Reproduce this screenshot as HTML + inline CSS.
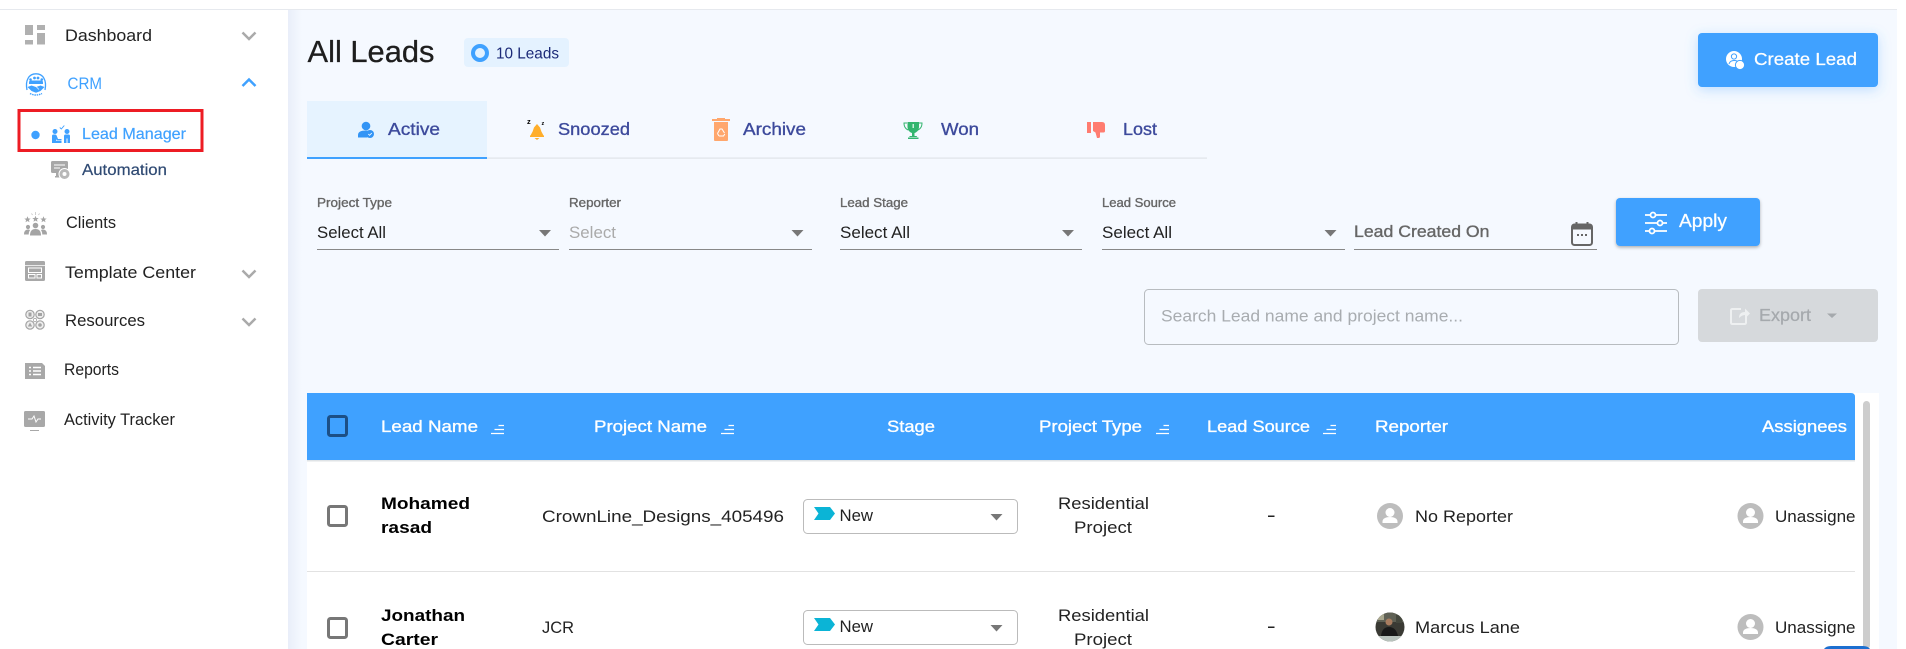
<!DOCTYPE html>
<html lang="en">
<head>
<meta charset="utf-8">
<title>All Leads</title>
<style>
html,body{margin:0;padding:0;width:1906px;height:649px;overflow:hidden;background:#fff}
svg{display:block}
text{font-family:"Liberation Sans",sans-serif;fill:currentColor;stroke-linejoin:round}
.m{stroke:currentColor;stroke-width:.35px}
.b{font-weight:700}
.nav{font-size:17px;color:#222}
.sub{font-size:16px}
.tab{font-size:17.5px;color:#3d4a9c}
.lab{font-size:12.5px;color:#666}
.val{font-size:16.5px;color:#222}
.th{font-size:17px;color:#fff}
.td{font-size:17px;color:#222}
.nm{font-size:17px;color:#000}
</style>
</head>
<body>
<svg width="1906" height="649" viewBox="0 0 1906 649" xmlns="http://www.w3.org/2000/svg">
<defs>
<linearGradient id="lg"><stop offset="0" stop-color="#e9eef9"/><stop offset="1" stop-color="#f5f9ff"/></linearGradient>
<filter id="sb" x="-20%" y="-40%" width="140%" height="190%"><feDropShadow dx="0" dy="3" stdDeviation="6" flood-color="#3fa1ff" flood-opacity=".3"/></filter>
<filter id="sd" x="-10%" y="-20%" width="120%" height="150%"><feDropShadow dx="0" dy="1.5" stdDeviation="1.5" flood-color="#000" flood-opacity=".3"/></filter>
<clipPath id="cp"><rect x="1700" y="460" width="155" height="189"/></clipPath>
<clipPath id="ph"><ellipse cx="1390" cy="627" rx="14.5" ry="14.5"/></clipPath>
<g id="ava"><circle r="13" fill="#bdbdbd"/><circle cy="-3.500" r="4.500" fill="#fff"/><path d="M-7.500 7v-1.500c0-3 3.500-4.500 7.500-4.500s7.500 1.500 7.500 4.500V7z" fill="#fff"/></g>
<g id="cb"><rect x="1.500" y="1.500" width="18" height="19" rx="2" fill="none" stroke="#777" stroke-width="3"/></g>
<g id="sort" fill="none" stroke="#fff" stroke-width="1.300"><path d="M0 11.500H13M3.500 7.500H13M7.500 3.500H13"/></g>
<path id="car" d="M-6-3H6L0 3.500z" fill="#777"/>
<path id="chd" d="M-6.500-3.500 0 3l6.500-6.500" fill="none" stroke="#aaa" stroke-width="2.500"/>
<g id="sel"><rect x=".5" y=".5" width="214" height="34" rx="4" fill="#fff" stroke="#bbb"/><path d="M11 8H27L32 14.500 27 21H11L15.500 14.500z" fill="#0bb4d6"/></g>
<path id="star" d="M0-3.200.9-1 3.200-.9 1.400.5 2 2.800 0 1.500-2 2.800-1.400.5-3.200-.9-.9-1z" fill="#a4a4a4"/>
</defs>

<!-- page surfaces -->
<rect width="1906" height="649" fill="#fff"/>
<rect x="288" y="9" width="1609" height="640" fill="#f5f9ff"/>
<rect x="288" y="9" width="14" height="640" fill="url(#lg)"/>
<rect x="0" y="9" width="1897" height="1" fill="#e6e9ee"/>

<!-- sidebar -->
<g fill="#b0b0b0">
<rect x="25" y="25" width="8" height="10"/><rect x="37" y="25" width="8" height="5"/><rect x="25" y="40" width="8" height="4.500"/><rect x="37" y="33" width="8" height="11.500"/>
</g>
<text class="nav" x="65" y="41" textLength="87" lengthAdjust="spacingAndGlyphs">Dashboard</text>
<use href="#chd" x="249" y="36"/>

<g fill="#3fa1ff">
<path d="M27 90C25 80 29 73.800 36 73.800S47 80 45 90" fill="none" stroke="#3fa1ff" stroke-width="1.300"/>
<circle cx="30.500" cy="79.500" r="1.300"/><circle cx="34.500" cy="78" r="1.400"/><circle cx="38" cy="78" r="1.400"/><circle cx="41.800" cy="79.500" r="1.300"/>
<path d="M29 84v-1.500q0-2 2-2h10q2 0 2 2V84z"/>
<path d="M27.500 87l4-1.500 4.500 1.500 4.500-1.500 4 1.500-4 4-4.500 1.800-4.500-1.800z"/>
<path d="M36 86.500l3 3" stroke="#fff" stroke-width=".6"/>
<path d="M30 93.500q6 3 12 0" fill="none" stroke="#3fa1ff" stroke-width="1.400" stroke-dasharray="1.500 .8"/>
</g>
<text class="nav" x="67.500" y="89" textLength="34.500" lengthAdjust="spacingAndGlyphs" style="color:#3fa1ff">CRM</text>
<path d="M242.500 86 249 79.500 255.500 86" fill="none" stroke="#3fa1ff" stroke-width="2.500"/>

<rect x="19" y="110.500" width="183" height="40" fill="none" stroke="#ed1c24" stroke-width="3"/>
<circle cx="35.500" cy="135" r="4.200" fill="#3fa1ff"/>
<g fill="#3fa1ff">
<circle cx="55" cy="131.500" r="2.500"/><circle cx="67" cy="131.500" r="2.500"/>
<path d="M52 143v-7q0-1.500 1.500-1.500h1.700q1 0 1.400 1l1.400 3.500h3.500v1.500H57l-.8-1.500V141h5.300v2z"/>
<path d="M64 143v-7q0-1.500 1.500-1.500h3q1.500 0 1.500 1.500v7h-2.500v-4.500h-1V143z"/>
<path d="M59.800 127.500l1.500 1.500 3-3.500" fill="none" stroke="#3fa1ff" stroke-width=".9"/>
</g>
<text class="sub m" x="82" y="139" textLength="104" lengthAdjust="spacingAndGlyphs" style="color:#3fa1ff;stroke-width:.2px">Lead Manager</text>

<g>
<rect x="51" y="161" width="17" height="12" rx="1.500" fill="#a8a8a8"/>
<path d="M54 165h11M54 168h6" stroke="#fff" stroke-width="1"/>
<path d="M56 173h6v3h2v1.500h-9V176h1z" fill="#a8a8a8"/>
<circle cx="64.500" cy="174" r="5.500" fill="#b8b8b8" stroke="#fff" stroke-width="1"/><circle cx="64.500" cy="174" r="2" fill="#fff"/>
</g>
<text class="sub m" x="82" y="175" textLength="85" lengthAdjust="spacingAndGlyphs" style="color:#2f4a73;stroke-width:.2px">Automation</text>

<path d="M35.500 212v3M31.500 213.500l1 1.500M39.500 213.500l-1 1.500" stroke="#bdbdbd" stroke-width=".7"/>
<use href="#star" x="27.500" y="219.500"/><use href="#star" x="35.500" y="219"/><use href="#star" x="43.500" y="219.500"/>
<g fill="#a4a4a4">
<circle cx="28" cy="227" r="2.100"/><circle cx="35.500" cy="225.500" r="2.800"/><circle cx="43" cy="227" r="2.100"/>
<path d="M24 234.500q0-5 4-5 1.500 0 2 .7-1.300 1.500-1.300 4.300zM47 234.500q0-5-4-5-1.500 0-2 .7 1.300 1.500 1.300 4.300zM30 235.500q0-6.500 5.500-6.500t5.500 6.500z"/>
</g>
<text class="nav" x="66" y="228" textLength="50" lengthAdjust="spacingAndGlyphs">Clients</text>

<rect x="25" y="261" width="20" height="20" rx="1.500" fill="#a8a8a8"/>
<path d="M25 265.500h20" stroke="#fff" stroke-width=".8"/>
<g fill="none" stroke="#fff" stroke-width="1"><rect x="28.500" y="268" width="13" height="4.500"/><rect x="28.500" y="274.500" width="6.500" height="3.500"/><rect x="37" y="274.500" width="4.500" height="3.500"/></g>
<text class="nav" x="65" y="278" textLength="131" lengthAdjust="spacingAndGlyphs">Template Center</text>
<use href="#chd" x="249" y="274"/>

<g fill="#eeeeee" stroke="#a4a4a4" stroke-width="1.200">
<circle cx="30" cy="314.500" r="4.200"/><circle cx="40" cy="314.500" r="4.200"/><circle cx="30" cy="325" r="4.200"/><circle cx="40" cy="325" r="4.200"/>
<circle cx="35" cy="320" r="1.700" fill="#fff" stroke-width=".8"/>
</g>
<g fill="#a4a4a4">
<rect x="28.500" y="312.500" width="3" height="4"/><rect x="38" y="313" width="4" height="3"/><path d="M30 322.500l2.200 4h-4.400z"/><circle cx="40" cy="325" r="1.800"/>
</g>
<text class="nav" x="65" y="326" textLength="80" lengthAdjust="spacingAndGlyphs">Resources</text>
<use href="#chd" x="249" y="322"/>

<path d="M25 363h17l3 3v13H25z" fill="#a8a8a8"/>
<path d="M29 367.500h2M33 367.500h8M29 371h2M33 371h8M29 374.500h2M33 374.500h8" stroke="#fff" stroke-width="1.400"/>
<text class="nav" x="64" y="375" textLength="55" lengthAdjust="spacingAndGlyphs">Reports</text>

<rect x="24" y="411" width="21" height="16" rx="1.500" fill="#a8a8a8"/>
<path d="M28 419h4l2-3 2 6 2-3h3" fill="none" stroke="#fff" stroke-width="1"/>
<path d="M30 430.500h9" stroke="#a8a8a8" stroke-width="1"/>
<text class="nav" x="64" y="425" textLength="111" lengthAdjust="spacingAndGlyphs">Activity Tracker</text>

<!-- heading -->
<text class="m" x="307.500" y="62" font-size="31" textLength="127" lengthAdjust="spacingAndGlyphs" style="color:#1e1e1e;stroke-width:.3px">All Leads</text>
<rect x="464" y="38" width="105" height="29" rx="4" fill="#e4f2ff"/>
<circle cx="480" cy="53" r="7" fill="none" stroke="#3fa1ff" stroke-width="4"/>
<text x="496" y="58.500" font-size="16" textLength="63" lengthAdjust="spacingAndGlyphs" style="color:#1c2a78">10 Leads</text>

<rect x="1698" y="33" width="180" height="54" rx="4" fill="#3fa1ff" filter="url(#sb)"/>
<circle cx="1734" cy="59" r="8" fill="#fff"/>
<circle cx="1734" cy="56.500" r="2.600" fill="none" stroke="#3fa1ff" stroke-width="1"/><path d="M1729 64q1-3.500 5-3.500t5 2.500" fill="none" stroke="#3fa1ff" stroke-width="1"/>
<circle cx="1740" cy="65" r="4.600" fill="#fff" stroke="#3fa1ff" stroke-width="1"/>
<text class="m" x="1754" y="65" font-size="17.500" textLength="103" lengthAdjust="spacingAndGlyphs" style="color:#fff;stroke-width:.25px">Create Lead</text>

<!-- tabs -->
<rect x="307" y="101" width="180" height="56" fill="#e6f3ff"/>
<rect x="487" y="157.500" width="720" height="1.200" fill="#dfe3e8"/>
<rect x="307" y="157" width="180" height="2" fill="#3fa1ff"/>

<g fill="#3394f5">
<circle cx="366" cy="126" r="4.300"/>
<path d="M358 137.500v-2.500q0-4.500 8-4.500 3 0 4.500 .8-3.500 1.500-3 6.200z"/>
<circle cx="370" cy="134" r="4"/>
</g>
<path d="M368.300 134l1.300 1.300 2.200-2.300" fill="none" stroke="#fff" stroke-width=".8"/>
<text class="tab m" x="388" y="135" textLength="52" lengthAdjust="spacingAndGlyphs">Active</text>

<g fill="#ffae2b">
<path d="M537 124l3 3.500q1 4 3.500 8h-13q2.500-4 3.500-8z"/>
<rect x="530" y="135.500" width="14" height="1.500"/>
<path d="M534.500 138h5l-2.500 2z"/>
<text x="527" y="124" font-size="7.500" class="b">z</text><text x="541.500" y="125" font-size="5.500" class="b">z</text>
</g>
<text class="tab m" x="558" y="135" textLength="72" lengthAdjust="spacingAndGlyphs">Snoozed</text>

<g>
<rect x="712" y="119" width="18" height="2" fill="#ffa76d"/><rect x="717" y="118" width="8" height="1.500" fill="#ffa76d"/>
<path d="M714 122h14v18q0 1-1 1h-12q-1 0-1-1z" fill="#ffa76d"/>
<path d="M717.500 133.500l2.500-4.500h2l2.500 4M719 136h4.500l1.300-2M717.500 133.500l1.500 2.500" fill="none" stroke="#fff" stroke-width="1"/>
</g>
<text class="tab m" x="743" y="135" textLength="63" lengthAdjust="spacingAndGlyphs">Archive</text>

<g fill="#33b56f">
<path d="M907.500 122h11.500v5q0 5-5.700 6.500-5.800-1.500-5.800-6.500z"/>
<rect x="912" y="133" width="2.500" height="3"/>
<path d="M910 136h6.500l.8 1H909z"/><rect x="908" y="137.500" width="10.500" height="1.500"/>
<path d="M907 123h-3q0 5 4 7M919 123h3q0 5-4 7" fill="none" stroke="#33b56f" stroke-width="1"/>
</g>
<rect x="912.500" y="124" width="1.500" height="4" fill="#c9f0da"/>
<text class="tab m" x="941" y="135" textLength="38" lengthAdjust="spacingAndGlyphs">Won</text>

<g fill="#ff7c70">
<rect x="1087" y="122" width="4" height="11"/>
<path d="M1093 122h9q3 0 3 3v6q0 1.500-1.500 1.500H1100v4q0 1.500-1.500 1.500H1097l-1.500-5.500-2.500-1.500z"/>
</g>
<text class="tab m" x="1123" y="135" textLength="34" lengthAdjust="spacingAndGlyphs">Lost</text>

<!-- filters -->
<text class="lab m" x="317" y="207" textLength="75" lengthAdjust="spacingAndGlyphs">Project Type</text>
<text class="val" x="317" y="238" textLength="69" lengthAdjust="spacingAndGlyphs">Select All</text>
<use href="#car" x="545" y="233"/><rect x="317" y="249" width="242" height="1" fill="#888"/>

<text class="lab m" x="569" y="207" textLength="52" lengthAdjust="spacingAndGlyphs">Reporter</text>
<text class="val" x="569" y="238" textLength="47" lengthAdjust="spacingAndGlyphs" style="color:#aaa">Select</text>
<use href="#car" x="797.500" y="233"/><rect x="569" y="249" width="243" height="1" fill="#888"/>

<text class="lab m" x="840" y="207" textLength="68" lengthAdjust="spacingAndGlyphs">Lead Stage</text>
<text class="val" x="840" y="238" textLength="70" lengthAdjust="spacingAndGlyphs">Select All</text>
<use href="#car" x="1068" y="233"/><rect x="840" y="249" width="242" height="1" fill="#888"/>

<text class="lab m" x="1102" y="207" textLength="74" lengthAdjust="spacingAndGlyphs">Lead Source</text>
<text class="val" x="1102" y="238" textLength="70" lengthAdjust="spacingAndGlyphs">Select All</text>
<use href="#car" x="1330.500" y="233"/><rect x="1102" y="249" width="243" height="1" fill="#888"/>

<text class="m" x="1354" y="237" font-size="16.500" textLength="135.500" lengthAdjust="spacingAndGlyphs" style="color:#666">Lead Created On</text>
<rect x="1354" y="249" width="243" height="1" fill="#888"/>
<rect x="1572" y="224.500" width="20" height="20.500" rx="2.500" fill="#f5f9ff" stroke="#666" stroke-width="2"/>
<path d="M1572 224.500h20v5h-20z" fill="#666"/><path d="M1576.500 222v4M1587.500 222v4" stroke="#666" stroke-width="2"/>
<path d="M1577 235h2M1581 235h2M1585 235h2" stroke="#666" stroke-width="2"/>

<rect x="1616" y="198" width="144" height="48" rx="4" fill="#3fa1ff" filter="url(#sd)"/>
<g fill="none" stroke="#fff" stroke-width="1.800">
<path d="M1645 215h5M1656 215h11M1645 223h12M1663 223h4M1645 231h4M1655 231h12"/>
<circle cx="1653" cy="215" r="2.500"/><circle cx="1660" cy="223" r="2.500"/><circle cx="1652" cy="231" r="2.500"/>
</g>
<text class="m" x="1679" y="227" font-size="18.500" textLength="48" lengthAdjust="spacingAndGlyphs" style="color:#fff;stroke-width:.25px">Apply</text>

<rect x="1144.500" y="289.500" width="534" height="55" rx="4" fill="#f5f9ff" stroke="#b8bcc0"/>
<text x="1161" y="321.500" font-size="16.500" textLength="302" lengthAdjust="spacingAndGlyphs" style="color:#a8acb0">Search Lead name and project name...</text>

<rect x="1698" y="289" width="180" height="53" rx="4" fill="#d6d9dc"/>
<path d="M1741 309h-8.500q-1.500 0-1.500 1.500v12q0 1.500 1.500 1.500h12q1.500 0 1.500-1.500V316" fill="none" stroke="#eef0f1" stroke-width="2"/>
<path d="M1739 318q0-6 6-6v-3.500l5 5-5 5V315q-3 0-6 3z" fill="#eef0f1"/>
<text class="m" x="1759" y="321" font-size="17.500" textLength="52" lengthAdjust="spacingAndGlyphs" style="color:#a5a9ad;stroke-width:.25px">Export</text>
<path d="M1827 313.500h10l-5 4.500z" fill="#a5a9ad"/>

<!-- table -->
<rect x="307" y="393" width="1572" height="256" fill="#fff"/>
<path d="M307 393H1851q4 0 4 4V460H307z" fill="#3fa1ff"/>
<rect x="307" y="460" width="1548" height="1.500" fill="#dfe3e6"/>
<rect x="307" y="571" width="1548" height="1" fill="#e2e2e2"/>
<rect x="1863" y="401" width="7" height="248" rx="3.500" fill="#cdcdcd"/>

<rect x="328.500" y="416.500" width="18" height="19" rx="2" fill="none" stroke="#1c4f86" stroke-width="3"/>
<text class="th m" x="381" y="432" textLength="97" lengthAdjust="spacingAndGlyphs">Lead Name</text><use href="#sort" x="491" y="422"/>
<text class="th m" x="594" y="432" textLength="113" lengthAdjust="spacingAndGlyphs">Project Name</text><use href="#sort" x="721" y="422"/>
<text class="th m" x="887" y="432" textLength="48" lengthAdjust="spacingAndGlyphs">Stage</text>
<text class="th m" x="1039" y="432" textLength="103" lengthAdjust="spacingAndGlyphs">Project Type</text><use href="#sort" x="1156" y="422"/>
<text class="th m" x="1207" y="432" textLength="103" lengthAdjust="spacingAndGlyphs">Lead Source</text><use href="#sort" x="1323" y="422"/>
<text class="th m" x="1375" y="432" textLength="73" lengthAdjust="spacingAndGlyphs">Reporter</text>
<text class="th m" x="1762" y="432" textLength="85" lengthAdjust="spacingAndGlyphs">Assignees</text>

<!-- row 1 -->
<use href="#cb" x="327" y="505"/>
<text class="nm b" x="381" y="509" textLength="89" lengthAdjust="spacingAndGlyphs">Mohamed</text>
<text class="nm b" x="381" y="533" textLength="51" lengthAdjust="spacingAndGlyphs">rasad</text>
<text class="td" x="542" y="522" textLength="242" lengthAdjust="spacingAndGlyphs">CrownLine_Designs_405496</text>
<use href="#sel" x="803" y="499"/>
<text class="td" x="839.500" y="521" textLength="33.500" lengthAdjust="spacingAndGlyphs">New</text>
<use href="#car" x="996.500" y="517"/>
<text class="td" x="1058" y="509" textLength="91" lengthAdjust="spacingAndGlyphs">Residential</text>
<text class="td" x="1074" y="533" textLength="58" lengthAdjust="spacingAndGlyphs">Project</text>
<rect x="1268" y="515.500" width="6.500" height="1.500" fill="#222"/>
<use href="#ava" x="1390" y="516"/>
<text class="td" x="1415" y="522" textLength="98" lengthAdjust="spacingAndGlyphs">No Reporter</text>
<use href="#ava" x="1750.500" y="516"/>
<g clip-path="url(#cp)"><text class="td" x="1775" y="522" textLength="90" lengthAdjust="spacingAndGlyphs">Unassigned</text></g>

<!-- row 2 -->
<use href="#cb" x="327" y="617"/>
<text class="nm b" x="381" y="621" textLength="84" lengthAdjust="spacingAndGlyphs">Jonathan</text>
<text class="nm b" x="381" y="645" textLength="57" lengthAdjust="spacingAndGlyphs">Carter</text>
<text class="td" x="542" y="633" textLength="32" lengthAdjust="spacingAndGlyphs">JCR</text>
<use href="#sel" x="803" y="610"/>
<text class="td" x="839.500" y="632" textLength="33.500" lengthAdjust="spacingAndGlyphs">New</text>
<use href="#car" x="996.500" y="628"/>
<text class="td" x="1058" y="621" textLength="91" lengthAdjust="spacingAndGlyphs">Residential</text>
<text class="td" x="1074" y="645" textLength="58" lengthAdjust="spacingAndGlyphs">Project</text>
<rect x="1268" y="626.500" width="6.500" height="1.500" fill="#222"/>
<g clip-path="url(#ph)">
<rect x="1375" y="612" width="30" height="30" fill="#3a3a34"/>
<rect x="1375" y="612" width="30" height="10" fill="#5f6155"/>
<rect x="1378" y="614" width="6" height="6" fill="#a9a78e"/>
<rect x="1396" y="615" width="6" height="8" fill="#44473d"/>
<rect x="1375" y="636" width="30" height="7" fill="#b9c3bd"/>
<circle cx="1389" cy="622" r="3.500" fill="#a87c5f"/>
<path d="M1381 636q1-9 8-9t9 9z" fill="#191919"/>
</g>
<text class="td" x="1415" y="633" textLength="105" lengthAdjust="spacingAndGlyphs">Marcus Lane</text>
<use href="#ava" x="1750.500" y="627"/>
<g clip-path="url(#cp)"><text class="td" x="1775" y="633" textLength="90" lengthAdjust="spacingAndGlyphs">Unassigned</text></g>

<path d="M1824 649q2-3 7-3h32q5 0 7 3z" fill="#1c6fd0"/>
</svg>
</body>
</html>
